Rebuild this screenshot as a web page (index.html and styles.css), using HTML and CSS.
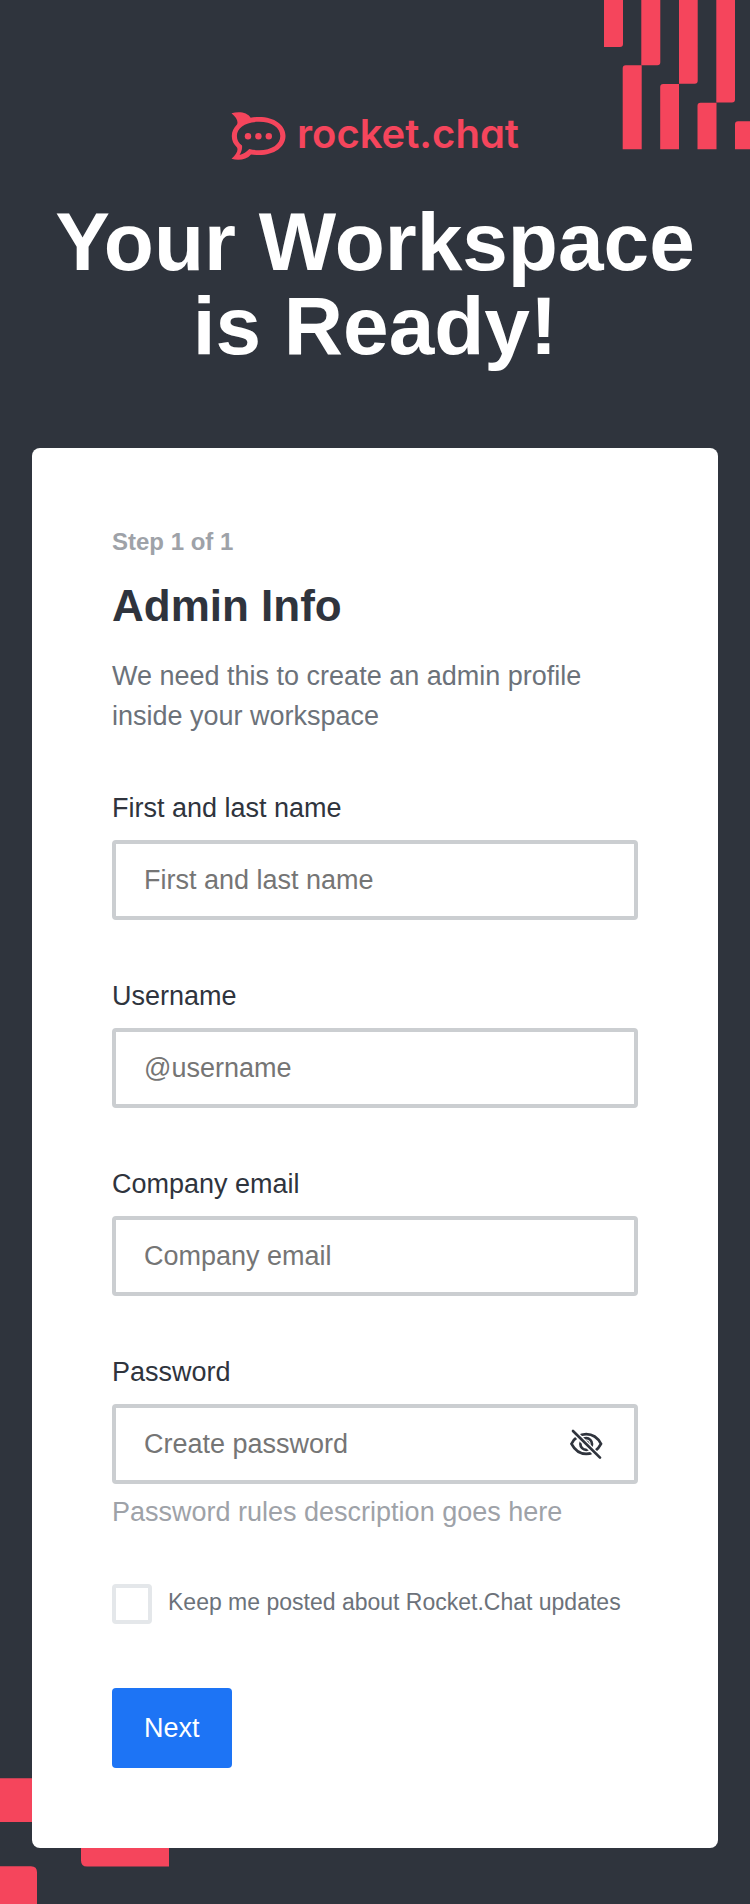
FILE: index.html
```html
<!DOCTYPE html>
<html lang="en">
<head>
<meta charset="utf-8">
<meta name="viewport" content="width=device-width, initial-scale=1">
<title>Rocket.Chat setup</title>
<link rel="stylesheet" href="styles.css">
</head>
<body>
<div class="page">
  <svg class="deco deco-top" width="146" height="150" viewBox="0 0 146 150" aria-hidden="true">
    <path d="M0 0h19v44q0 3-3 3H0zM37.300 0h19v62.300q0 3-3 3h-16zM75 0h18.700v80.700q0 3-3 3H75zM112.300 0H131v99.500q0 3-3 3h-15.700z"/>
    <path d="M18.700 149.300v-81q0-3 3-3h16v84zM56.200 149.300V87q0-3 3-3H75v65.300zM93.500 149.300v-43.600q0-3 3-3h16v46.600zM131 149.300v-25q0-3 3-3h16v28z"/>
  </svg>
  <svg class="deco deco-bottom" width="170" height="126" viewBox="0 0 170 126" aria-hidden="true">
    <path d="M0 .3h81v43.700H0zM81 44h88v44.500H87q-6 0-6-6zM0 88.300h31q6 0 6 6V126H0z"/>
  </svg>

  <header class="header">
    <div class="logo">
      <svg class="logo-mark" width="56" height="48" viewBox="0 0 56 48" aria-hidden="true">
        <path fill-rule="evenodd" d="M.5 1.200C8-1 16.500.2 19.700 5.800C22 5.200 25 5 28 5C43.500 5 54.500 13 54.500 24C54.500 35 43.500 43 28 43C25 43 22.500 42.800 20 42.400C15.500 47.800 7.500 49 .5 46.800C5.500 42.500 7.500 38.500 6 35.500C2.500 32 .8 28.500 .8 24C.8 19.500 2.500 16 6 12.500C7.500 9.500 5.500 5.500 .5 1.200zM28 9.800C14.500 9.800 5.900 15.800 5.900 24C5.900 28 7.500 31 11 33.500C11.500 37 10.200 40.500 8.500 43C12.500 42 15.500 39.500 18.300 36.900C21.200 37.800 24.500 38.200 28 38.200C41 38.200 49.300 32.200 49.300 24C49.300 15.800 41 9.800 28 9.800z"/>
        <circle cx="17" cy="24.300" r="3.200"/><circle cx="27.400" cy="24.300" r="3.200"/><circle cx="37.800" cy="24.300" r="3.200"/>
      </svg>
      <span class="logo-name">rocket.chat</span>
    </div>
    <h1 class="title">Your Workspace<br>is Ready!</h1>
  </header>

  <main class="card">
    <form class="form">
      <p class="step">Step 1 of 1</p>
      <h2 class="heading">Admin Info</h2>
      <p class="intro">We need this to create an admin profile inside your workspace</p>

      <div class="field">
        <label class="label" for="name">First and last name</label>
        <input class="input" id="name" type="text" placeholder="First and last name">
      </div>
      <div class="field">
        <label class="label" for="username">Username</label>
        <input class="input" id="username" type="text" placeholder="@username">
      </div>
      <div class="field">
        <label class="label" for="email">Company email</label>
        <input class="input" id="email" type="email" placeholder="Company email">
      </div>
      <div class="field">
        <label class="label" for="password">Password</label>
        <div class="input password">
          <input class="password-input" id="password" type="password" placeholder="Create password" aria-describedby="rules">
          <button class="reveal" type="button" aria-label="Show password">
            <svg width="40" height="40" viewBox="0 0 40 40" aria-hidden="true">
              <g fill="none" stroke="#2f343d" stroke-width="2.700" stroke-linecap="round">
                <path d="M5.500 19.800C9 13.500 14.500 10.200 20.200 10.200S31.500 13.500 35 19.800C31.500 26.500 26 29.800 20.200 29.800S9 26.500 5.500 19.800z"/>
                <circle cx="20.200" cy="20" r="5.800"/>
                <path d="M19 17.500c2 0 3.300 1.200 3.500 3.200"/>
                <path stroke="#fff" stroke-width="5.500" stroke-linecap="butt" d="M7 7l27 27"/>
                <path d="M7 7l27 26.600"/>
              </g>
            </svg>
          </button>
        </div>
        <p class="hint" id="rules">Password rules description goes here</p>
      </div>

      <label class="check">
        <input class="checkbox" type="checkbox">
        <span>Keep me posted about Rocket.Chat updates</span>
      </label>
      <button class="next" type="submit">Next</button>
    </form>
  </main>
</div>
</body>
</html>
```

FILE: styles.css
```css
* {
  box-sizing: border-box;
}

body {
  margin: 0;
  background: #2f343d;
  color: #2f343d;
  font-family: "Liberation Sans", Arial, sans-serif;
  font-size: 27px;
  line-height: 40px;
}

h1, h2, p {
  margin: 0;
}

input, button {
  font: inherit;
}

.page {
  position: relative;
  min-height: 100vh;
  padding: 112px 32px 56px;
  overflow: hidden;
}

.deco {
  position: absolute;
  fill: #f5455c;
}

.deco-top {
  top: 0;
  right: 0;
}

.deco-bottom {
  bottom: 0;
  left: 0;
}

.header {
  position: relative;
  display: flex;
  flex-direction: column;
  align-items: center;
  gap: 40px;
  margin-bottom: 80px;
  text-align: center;
}

.logo {
  display: flex;
  align-items: flex-start;
  gap: 10px;
  color: #f5455c;
}

.logo-mark {
  fill: currentColor;
}

.logo-name {
  font-family: Inter, sans-serif;
  font-feature-settings: "cv11";
  font-size: 40px;
  font-weight: 600;
  line-height: 44px;
}

.title {
  color: #fff;
  font-size: 82px;
  line-height: 84px;
}

.card {
  position: relative;
  padding: 80px;
  border-radius: 8px;
  background: #fff;
}

.form {
  display: flex;
  flex-direction: column;
}

.step {
  color: #9ea2a8;
  font-size: 24px;
  font-weight: 700;
  line-height: 28px;
}

.heading {
  margin: 20px 0;
  font-size: 44px;
  line-height: 60px;
}

.intro {
  color: #6c727a;
}

.field {
  display: flex;
  flex-direction: column;
  margin-top: 52px;
}

.field + .field {
  margin-top: 56px;
}

.label {
  margin-bottom: 12px;
}

.input {
  width: 100%;
  height: 80px;
  padding: 0 28px;
  border: 4px solid #cbced1;
  border-radius: 4px;
  background: #fff;
}

.input::placeholder,
.password-input::placeholder {
  color: #757575;
}

.password {
  display: flex;
  align-items: center;
}

.password-input {
  flex: 1;
  min-width: 0;
  padding: 0;
  border: 0;
  outline: 0;
}

.reveal {
  display: flex;
  padding: 0;
  border: 0;
  background: none;
}

.hint {
  margin-top: 8px;
  color: #9ea2a8;
}

.check {
  display: flex;
  align-items: flex-start;
  gap: 16px;
  margin-top: 52px;
  color: #6c727a;
  font-size: 23px;
  line-height: 36px;
}

.checkbox {
  flex: none;
  width: 40px;
  height: 40px;
  margin: 0;
  border: 4px solid #e4e7ea;
  border-radius: 4px;
  appearance: none;
}

.checkbox:checked {
  background: #1d74f5;
}

.next {
  align-self: flex-start;
  height: 80px;
  margin-top: 64px;
  padding: 0 32px;
  border: 0;
  border-radius: 4px;
  background: #1d74f5;
  color: #fff;
}
```
